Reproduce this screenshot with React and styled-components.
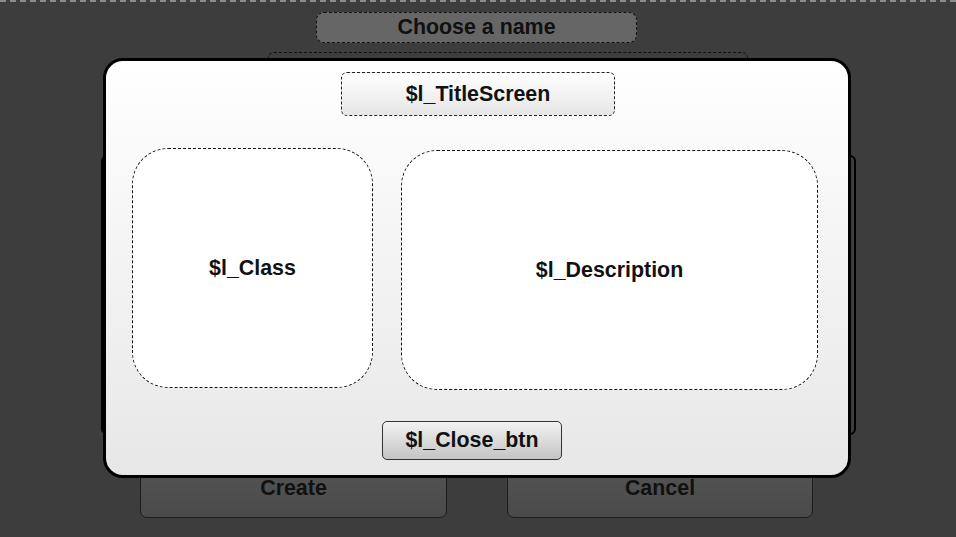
import React from 'react';
import styled, { createGlobalStyle } from 'styled-components';

const GlobalStyle = createGlobalStyle`
  html, body {
    margin: 0;
    padding: 0;
    background: #3d3d3d;
  }
  body {
    font-family: "Liberation Sans", Arial, sans-serif;
  }
`;

const Screen = styled.div`
  position: relative;
  width: 956px;
  height: 537px;
  box-sizing: border-box;
  overflow: hidden;
  background: #3d3d3d;
  border-top: 2px dashed #8c8c8c;
  display: flex;
  flex-direction: column;
  align-items: center;
`;

const NameLabel = styled.div`
  margin-top: 10px;
  margin-left: -3px;
  width: 321px;
  height: 31px;
  box-sizing: border-box;
  border: 1px dashed #111;
  border-radius: 8px;
  background: #666666;
  color: #111;
  font-size: 21.4px;
  font-weight: bold;
  display: flex;
  align-items: center;
  justify-content: center;
`;

const NameInput = styled.div`
  margin-top: 9px;
  margin-left: 60px;
  width: 480px;
  height: 40px;
  box-sizing: border-box;
  border: 1px dashed #111;
  border-radius: 6px;
`;

const Panel = styled.div`
  margin-top: 63px;
  width: 755px;
  height: 280px;
  box-sizing: border-box;
  border: 2px solid #000;
  border-radius: 6px;
`;

const ButtonRow = styled.div`
  margin-top: 23px;
  display: flex;
  gap: 60px;
  margin-left: -3px;
`;

const DarkButton = styled.div`
  width: ${p => p.$w}px;
  height: 60px;
  box-sizing: border-box;
  border: 1px solid #1c1c1c;
  border-radius: 7px;
  background: linear-gradient(#555555, #4a4a4a);
  color: #111;
  font-size: 21.4px;
  font-weight: bold;
  display: flex;
  align-items: center;
  justify-content: center;
`;

const Modal = styled.div`
  position: absolute;
  left: 103px;
  top: 56px;
  width: 748px;
  height: 420px;
  box-sizing: border-box;
  border: 3px solid #000;
  border-radius: 20px;
  background: linear-gradient(#ffffff, #e7e7e7);
  padding: 11px 30px 0 26px;
  display: flex;
  flex-direction: column;
  align-items: center;
`;

const TitleBox = styled.div`
  width: 274px;
  height: 44px;
  box-sizing: border-box;
  border: 1px dashed #222;
  border-radius: 6px;
  background: linear-gradient(#ffffff, #e6e6e6);
  color: #111;
  font-size: 21.4px;
  font-weight: bold;
  display: flex;
  align-items: center;
  justify-content: center;
  margin-left: 6px;
`;

const Boxes = styled.div`
  margin-top: 32px;
  align-self: stretch;
  display: flex;
  align-items: flex-start;
  gap: 28px;
`;

const InfoBox = styled.div`
  width: ${p => p.$w}px;
  height: 240px;
  margin-top: ${p => p.$top || 0}px;
  box-sizing: border-box;
  border: 1px dashed #111;
  border-radius: 36px;
  background: #fff;
  color: #111;
  font-size: 21.4px;
  font-weight: bold;
  display: flex;
  align-items: center;
  justify-content: center;
`;

const CloseButton = styled.div`
  margin-top: 31px;
  margin-left: -6px;
  width: 180px;
  height: 39px;
  box-sizing: border-box;
  border: 1px solid #333;
  border-radius: 5px;
  background: linear-gradient(#f2f2f2, #c4c4c4);
  color: #111;
  font-size: 21.4px;
  font-weight: bold;
  display: flex;
  align-items: center;
  justify-content: center;
`;

const App = () => {
  return (
    <>
      <GlobalStyle />
      <Screen>
        <NameLabel>Choose a name</NameLabel>
        <NameInput />
        <Panel />
        <ButtonRow>
          <DarkButton $w={307}>Create</DarkButton>
          <DarkButton $w={306}>Cancel</DarkButton>
        </ButtonRow>
        <Modal>
          <TitleBox>$l_TitleScreen</TitleBox>
          <Boxes>
            <InfoBox $w={241}>$l_Class</InfoBox>
            <InfoBox $w={417} $top={2}>$l_Description</InfoBox>
          </Boxes>
          <CloseButton>$l_Close_btn</CloseButton>
        </Modal>
      </Screen>
    </>
  );
};

export default App;
